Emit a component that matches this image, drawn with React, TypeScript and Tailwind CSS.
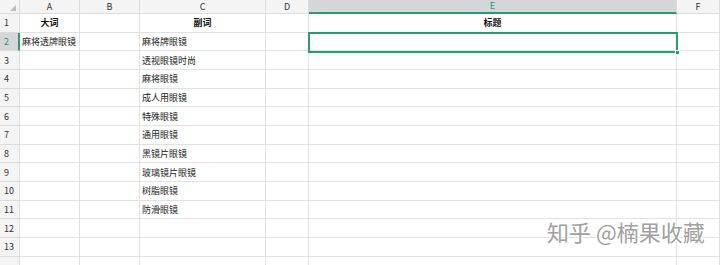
import React from "react";

const cols = ["A", "B", "C", "D", "E", "F"];
const colW = [60, 60, 126, 43, 368, 43];

const data: Record<number, Record<string, { t: string; b?: boolean; c?: boolean }>> = {
  1: { A: { t: "大词", b: true, c: true }, C: { t: "副词", b: true, c: true }, E: { t: "标题", b: true, c: true } },
  2: { A: { t: "麻将透牌眼镜" }, C: { t: "麻将牌眼镜" } },
  3: { C: { t: "透视眼镜时尚" } },
  4: { C: { t: "麻将眼镜" } },
  5: { C: { t: "成人用眼镜" } },
  6: { C: { t: "特殊眼镜" } },
  7: { C: { t: "通用眼镜" } },
  8: { C: { t: "黑镜片眼镜" } },
  9: { C: { t: "玻璃镜片眼镜" } },
  10: { C: { t: "树脂眼镜" } },
  11: { C: { t: "防滑眼镜" } },
};

const font = { fontFamily: '"Noto Sans CJK SC", "Noto Sans", sans-serif' };

export default function App() {
  const rows = Array.from({ length: 14 }, (_, i) => i + 1);
  return (
    <div className="relative w-[720px] h-[265px] overflow-hidden bg-white text-[#222]" style={font}>
      {/* header row */}
      <div className="flex h-[14px]">
        <div className="relative w-[20px] shrink-0 bg-[#f4f4f4] border-r border-b border-[#dcdcdc]">
          <div className="absolute right-[3px] bottom-[2px] w-0 h-0 border-l-[6px] border-l-transparent border-b-[6px] border-b-[#bdbdbd]" />
        </div>
        {cols.map((c, i) => (
          <div
            key={c}
            style={{ width: colW[i] }}
            className={
              c === "E"
                ? "shrink-0 flex items-center justify-center bg-[#d4d6da] border-r border-[#dcdcdc] border-b-2 border-b-[#22a06b] text-[9px] text-[#22a06b] leading-[12px]"
                : "shrink-0 flex items-center justify-center bg-[#f4f4f4] border-r border-b border-[#dcdcdc] text-[9px] text-[#333] leading-[12px]"
            }
          >
            {c}
          </div>
        ))}
      </div>
      {rows.map((r) => (
        <div key={r} className="flex h-[18.67px]">
          <div
            className={
              r === 2
                ? "w-[20px] shrink-0 flex items-center pl-[4px] bg-[#d4d6da] border-r-2 border-r-[#22a06b] border-b border-[#dcdcdc] text-[9px] text-[#22a06b] leading-none"
                : "w-[20px] shrink-0 flex items-center pl-[4px] bg-[#f4f4f4] border-r border-b border-[#dcdcdc] text-[9px] text-[#333] leading-none"
            }
          >
            {r < 14 ? r : ""}
          </div>
          {cols.map((c, i) => {
            const cell = data[r]?.[c];
            return (
              <div
                key={c}
                style={{ width: colW[i] }}
                className={
                  "shrink-0 flex items-center border-r border-b border-[#e1e1e1] text-[9px] leading-none whitespace-nowrap overflow-hidden " +
                  (cell?.c ? "justify-center " : "pl-[2px] ") +
                  (cell?.b ? "font-bold text-[#111]" : "text-[#222]")
                }
              >
                {cell?.t}
              </div>
            );
          })}
        </div>
      ))}
      {/* selection on E2 */}
      <div className="absolute left-[308px] top-[32px] w-[370px] h-[21px] border-2 border-[#22a06b] pointer-events-none">
        <div className="absolute right-[-4px] bottom-[-4px] w-[5px] h-[5px] bg-[#22a06b] border border-white" />
      </div>
      {/* watermark */}
      <div
        className="absolute left-[547px] top-[220px] text-[22px] leading-none text-[#a0a0a0] whitespace-nowrap"
        style={{ textShadow: "1px 1px 0 #fff, -1px -1px 0 #fff, 1px -1px 0 #fff, -1px 1px 0 #fff" }}
      >
        知乎 @楠果收藏
      </div>
    </div>
  );
}
